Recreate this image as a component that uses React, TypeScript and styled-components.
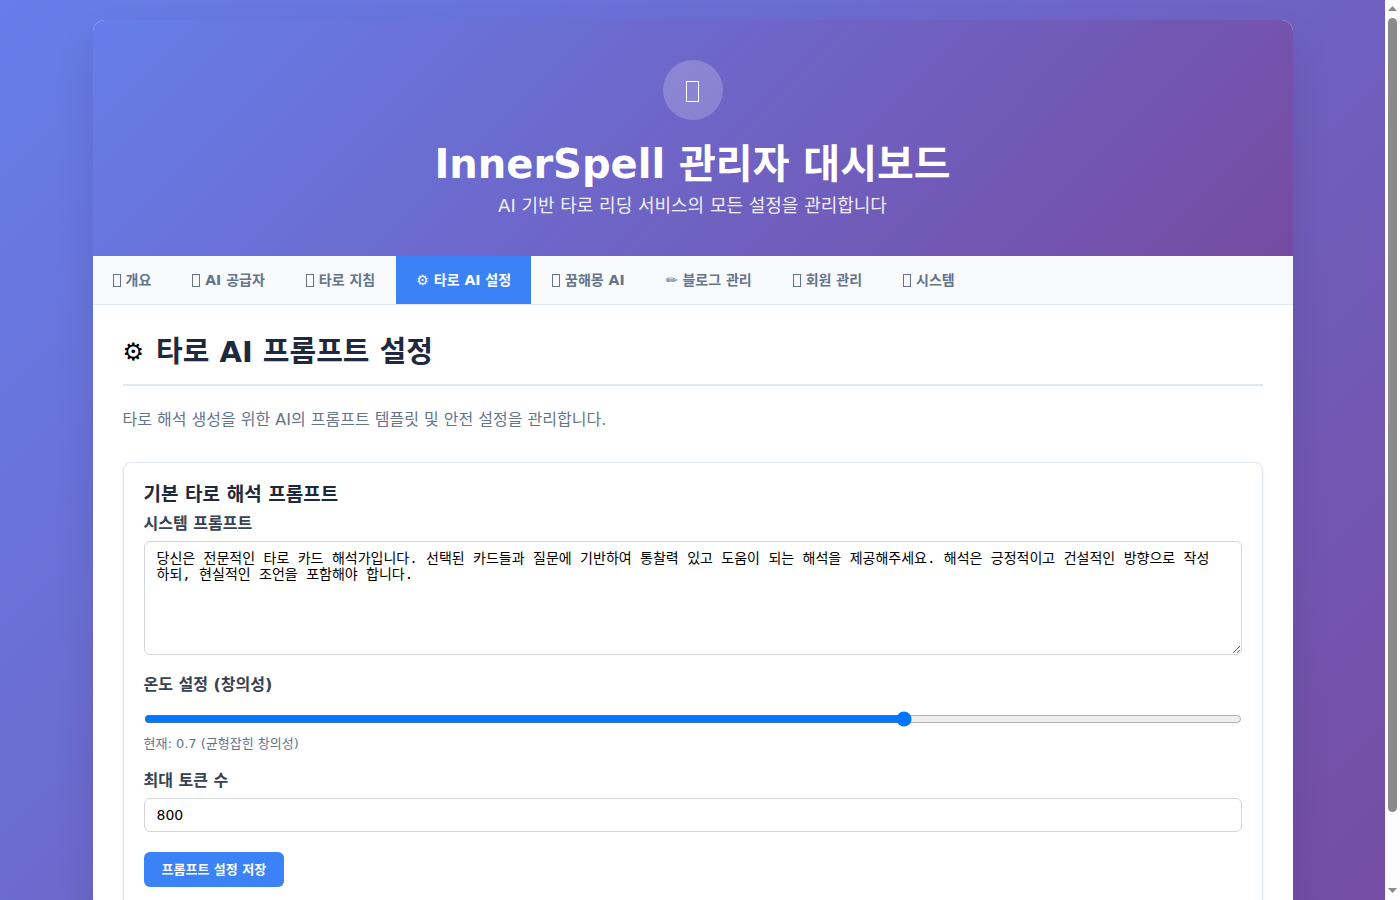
import React, { useLayoutEffect, useState } from "react";
import styled, { createGlobalStyle } from "styled-components";

const GlobalStyle = createGlobalStyle`
  * {
    box-sizing: border-box;
    margin: 0;
    padding: 0;
  }

  html {
    scrollbar-width: none;
  }

  body {
    font-family: "DejaVu Sans", "Noto Sans CJK KR", sans-serif;
  }
`;

const Shell = styled.div`
  display: flex;
  align-items: stretch;
  min-height: 100vh;
`;

const Page = styled.div`
  flex: 1;
  min-width: 0;
  padding: 20px;
  background: linear-gradient(135deg, #667eea 0%, #764ba2 100%);
`;

const ScrollRail = styled.div`
  position: sticky;
  top: 0;
  display: flex;
  flex: none;
  flex-direction: column;
  gap: 7px;
  width: 15px;
  height: 100vh;
  padding: 6px 3px 7px;
  background: #fcfcfc;
`;

const ScrollArrow = styled.svg`
  display: block;
  flex: none;
  width: 9px;
  height: 5px;
  fill: #8b8b8b;
`;

const ScrollTrack = styled.div`
  flex: 1;
  min-height: 0;
`;

const ScrollThumb = styled.div`
  width: 9px;
  background: #8b8b8b;
  border-radius: 5px;
`;

const Container = styled.div`
  max-width: 1200px;
  margin: 0 auto;
  overflow: hidden;
  background: #ffffff;
  border-radius: 12px;
  box-shadow: 0 20px 40px rgba(0, 0, 0, 0.1);
`;

const Header = styled.header`
  padding: 40px;
  color: #ffffff;
  text-align: center;
  background: linear-gradient(135deg, #667eea 0%, #764ba2 100%);
`;

const Logo = styled.div`
  display: flex;
  align-items: center;
  justify-content: center;
  width: 60px;
  height: 60px;
  margin: 0 auto 20px;
  padding-top: 3px;
  background: rgba(255, 255, 255, 0.2);
  border-radius: 50%;
`;

const BoxGlyph = styled.span<{ $large?: boolean }>`
  flex: none;
  width: ${(p) => (p.$large ? 13 : 8)}px;
  height: ${(p) => (p.$large ? 21 : 13)}px;
  border: 1px solid currentColor;
`;

const Title = styled.h1`
  margin-bottom: 8px;
  font-size: 40px;
  font-weight: 700;
  line-height: 48px;
`;

const Subtitle = styled.p`
  font-size: 18px;
  line-height: 20px;
  opacity: 0.9;
`;

const TabBar = styled.nav`
  display: flex;
  gap: 1px;
  background: #f8fafc;
  border-bottom: 1px solid #e2e8f0;
`;

const Tab = styled.button<{ $active: boolean }>`
  display: flex;
  gap: 5px;
  align-items: center;
  padding: 16px 20px;
  color: ${(p) => (p.$active ? "#ffffff" : "#64748b")};
  font-family: inherit;
  font-size: 14px;
  font-weight: 600;
  line-height: 16px;
  white-space: nowrap;
  background: ${(p) => (p.$active ? "#3b82f6" : "transparent")};
  border: none;
  cursor: pointer;
`;

const Content = styled.main`
  padding: 30px;
`;

const SectionHeader = styled.div`
  display: flex;
  align-items: center;
  margin-bottom: 24px;
  padding-bottom: 15px;
  line-height: 34px;
  border-bottom: 2px solid #e2e8f0;
`;

const SectionIcon = styled.span`
  margin-right: 12px;
  font-size: 24px;
`;

const SectionTitle = styled.h2`
  color: #1e293b;
  font-size: 29px;
  font-weight: 700;
`;

const Description = styled.p`
  margin-bottom: 32px;
  color: #64748b;
  font-size: 16px;
  line-height: 20px;
`;

const Card = styled.form`
  margin-bottom: 20px;
  padding: 20px;
  background: #ffffff;
  border: 1px solid #e2e8f0;
  border-radius: 8px;
  box-shadow: 0 1px 3px rgba(0, 0, 0, 0.1);
`;

const CardTitle = styled.h3`
  margin-bottom: 8px;
  color: #1e293b;
  font-size: 19px;
  font-weight: 600;
  line-height: 23px;
`;

const Field = styled.div`
  margin-bottom: 20px;
`;

const Label = styled.label`
  display: block;
  margin-bottom: 8px;
  color: #374151;
  font-size: 16px;
  font-weight: 600;
  line-height: 19px;
`;

const PromptArea = styled.textarea`
  display: block;
  width: 100%;
  min-height: 114px;
  padding: 8px 20px 8px 12px;
  font-family: "DejaVu Sans Mono", "Noto Sans CJK KR", monospace;
  font-size: 14px;
  line-height: 16px;
  border: 1px solid #d1d5db;
  border-radius: 6px;
  resize: vertical;
`;

const Slider = styled.input`
  display: block;
  width: 100%;
  height: 34px;
  padding: 8px 12px;
`;

const NumberInput = styled.input`
  display: block;
  width: 100%;
  height: 34px;
  padding: 8px 12px;
  font-family: inherit;
  font-size: 14px;
  border: 1px solid #d1d5db;
  border-radius: 6px;
`;

const Hint = styled.p`
  color: #64748b;
  font-size: 13px;
  line-height: 15px;
`;

const SaveButton = styled.button`
  display: block;
  padding: 10px 18px;
  color: #ffffff;
  font-family: inherit;
  font-size: 13px;
  font-weight: 600;
  line-height: 15px;
  background: #3b82f6;
  border: none;
  border-radius: 6px;
  cursor: pointer;
`;

const TABS = [
  { id: "overview", label: "개요" },
  { id: "providers", label: "AI 공급자" },
  { id: "guidelines", label: "타로 지침" },
  { id: "tarot", icon: "⚙", label: "타로 AI 설정" },
  { id: "dream", label: "꿈해몽 AI" },
  { id: "blog", icon: "✏", label: "블로그 관리" },
  { id: "members", label: "회원 관리" },
  { id: "system", label: "시스템" },
];

const DEFAULT_PROMPT =
  "당신은 전문적인 타로 카드 해석가입니다. 선택된 카드들과 질문에 기반하여 통찰력 있고 도움이 되는 해석을 제공해주세요. 해석은 긍정적이고 건설적인 방향으로 작성하되, 현실적인 조언을 포함해야 합니다.";

// Page scroll indicator: the thumb follows the window's scroll position.
function PageScrollbar() {
  const [thumb, setThumb] = useState({ height: 0, offset: 0 });

  useLayoutEffect(() => {
    const update = () => {
      const total = document.documentElement.scrollHeight;
      const track = window.innerHeight - 37;
      setThumb({
        height: Math.round((track * window.innerHeight) / total),
        offset: Math.round((track * window.scrollY) / total),
      });
    };
    update();
    window.addEventListener("scroll", update);
    window.addEventListener("resize", update);
    return () => {
      window.removeEventListener("scroll", update);
      window.removeEventListener("resize", update);
    };
  }, []);

  return (
    <ScrollRail aria-hidden="true">
      <ScrollArrow viewBox="0 0 9 5">
        <path d="M4.5 0 L9 5 H0 Z" />
      </ScrollArrow>
      <ScrollTrack>
        <ScrollThumb
          style={{
            height: thumb.height,
            transform: `translateY(${thumb.offset}px)`,
          }}
        />
      </ScrollTrack>
      <ScrollArrow viewBox="0 0 9 5">
        <path d="M0 0 H9 L4.5 5 Z" />
      </ScrollArrow>
    </ScrollRail>
  );
}

export default function App() {
  const [activeTab, setActiveTab] = useState("tarot");
  const [temperature, setTemperature] = useState("0.7");

  return (
    <Shell>
      <GlobalStyle />
      <Page>
        <Container>
          <Header>
            <Logo>
              <BoxGlyph $large aria-hidden="true" />
            </Logo>
            <Title>InnerSpell 관리자 대시보드</Title>
            <Subtitle>AI 기반 타로 리딩 서비스의 모든 설정을 관리합니다</Subtitle>
          </Header>
          <TabBar>
            {TABS.map((tab) => (
              <Tab
                key={tab.id}
                type="button"
                $active={tab.id === activeTab}
                onClick={() => setActiveTab(tab.id)}
              >
                {tab.icon ? <span>{tab.icon}</span> : <BoxGlyph aria-hidden="true" />}
                <span>{tab.label}</span>
              </Tab>
            ))}
          </TabBar>
          <Content>
            <SectionHeader>
              <SectionIcon>⚙</SectionIcon>
              <SectionTitle>타로 AI 프롬프트 설정</SectionTitle>
            </SectionHeader>
            <Description>
              타로 해석 생성을 위한 AI의 프롬프트 템플릿 및 안전 설정을 관리합니다.
            </Description>
            <Card onSubmit={(e) => e.preventDefault()}>
              <CardTitle>기본 타로 해석 프롬프트</CardTitle>
              <Field>
                <Label htmlFor="system-prompt">시스템 프롬프트</Label>
                <PromptArea id="system-prompt" defaultValue={DEFAULT_PROMPT} />
              </Field>
              <Field>
                <Label htmlFor="temperature">온도 설정 (창의성)</Label>
                <Slider
                  id="temperature"
                  type="range"
                  min="0"
                  max="1"
                  step="0.1"
                  value={temperature}
                  onChange={(e) => setTemperature(e.target.value)}
                />
                <Hint>현재: {temperature} (균형잡힌 창의성)</Hint>
              </Field>
              <Field>
                <Label htmlFor="max-tokens">최대 토큰 수</Label>
                <NumberInput id="max-tokens" type="number" defaultValue={800} />
              </Field>
              <SaveButton type="submit">프롬프트 설정 저장</SaveButton>
            </Card>
          </Content>
        </Container>
      </Page>
      <PageScrollbar />
    </Shell>
  );
}
